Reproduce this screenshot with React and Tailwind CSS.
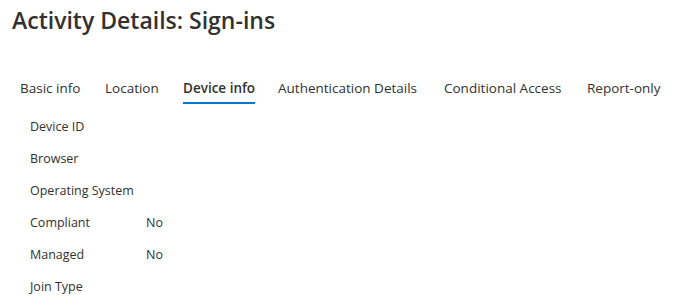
import React from 'react';

const tabs = [
  { label: 'Basic info', w: 'w-[85px]' },
  { label: 'Location', w: 'w-[78px]' },
  { label: 'Device info', w: 'w-[95px]' },
  { label: 'Authentication Details', w: 'w-[166px]' },
  { label: 'Conditional Access', w: 'w-[143px]' },
  { label: 'Report-only', w: 'w-[90px]' },
];

const rows = [
  ['Device ID', ''],
  ['Browser', ''],
  ['Operating System', ''],
  ['Compliant', 'No'],
  ['Managed', 'No'],
  ['Join Type', ''],
];

export default function App() {
  return (
    <div
      className="w-[687px] h-[308px] bg-white text-[#323130] overflow-hidden"
      style={{ fontFamily: '"Open Sans", "Noto Sans", sans-serif' }}
    >
      <h1 className="pl-[12px] pt-[4px] text-[23px] leading-[32px] font-semibold">
        Activity Details: Sign-ins
      </h1>

      <nav className="flex pl-[20px] mt-[42px] text-[13.5px]">
        {tabs.map((t, i) => (
          <div key={t.label} className={`${t.w} shrink-0 flex flex-col items-start`}>
            <span
              className={`leading-[20px] whitespace-nowrap ${
                i === 2 ? 'font-semibold border-b-2 border-[#0078d4] pb-[4px]' : 'pb-[6px]'
              }`}
            >
              {t.label}
            </span>
          </div>
        ))}
      </nav>

      <div className="pl-[30px] pt-[7px] text-[12.5px]">
        {rows.map(([k, v]) => (
          <div key={k} className="flex h-[32px] items-center">
            <span className="w-[116px] shrink-0">{k}</span>
            <span>{v}</span>
          </div>
        ))}
      </div>
    </div>
  );
}
